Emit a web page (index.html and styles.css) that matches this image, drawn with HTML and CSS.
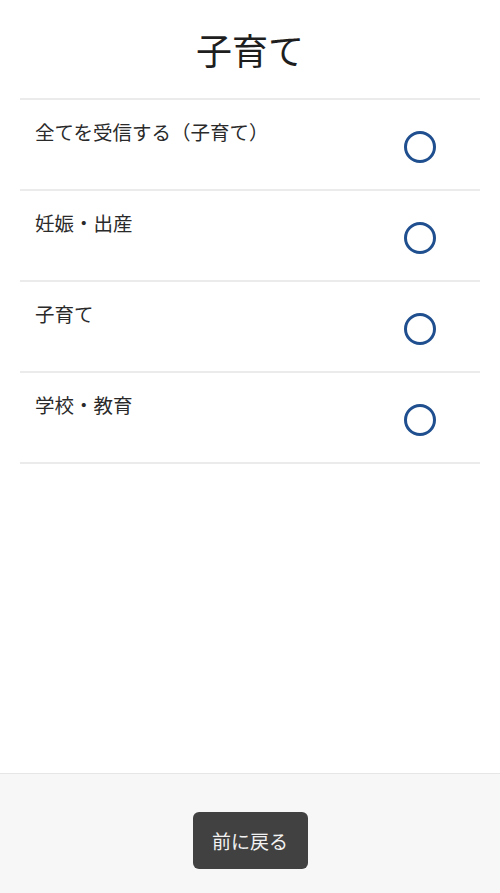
FILE: index.html
```html
<!DOCTYPE html>
<html lang="ja">
<head>
<meta charset="utf-8">
<title>子育て</title>
<link rel="stylesheet" href="styles.css">
</head>
<body>
<div class="page">
  <main class="main">
    <header class="header"><h1 class="title">子育て</h1></header>
    <ul class="list">
      <li class="row"><span class="label">全てを受信する（子育て）</span><span class="radio"></span></li>
      <li class="row"><span class="label">妊娠・出産</span><span class="radio"></span></li>
      <li class="row"><span class="label">子育て</span><span class="radio"></span></li>
      <li class="row"><span class="label">学校・教育</span><span class="radio"></span></li>
    </ul>
  </main>
  <footer class="footer">
    <button class="back" type="button">前に戻る</button>
  </footer>
</div>
</body>
</html>
```

FILE: styles.css
```css
html, body {
  margin: 0;
  padding: 0;
  background: #ffffff;
}
body {
  font-family: "Noto Sans CJK JP", "Noto Sans", sans-serif;
  color: #222222;
}
.page {
  display: flex;
  flex-direction: column;
  min-height: 100vh;
}
.main {
  flex: 1;
}
.header {
  height: 98px;
  display: flex;
  align-items: center;
  justify-content: center;
}
.title {
  margin: 0;
  font-size: 36px;
  font-weight: 400;
  line-height: 1;
  color: #1e1e1e;
}
.list {
  list-style: none;
  margin: 0 20px;
  padding: 0;
  border-top: 2px solid #ebebeb;
}
.row {
  display: flex;
  justify-content: space-between;
  align-items: flex-start;
  height: 91px;
  box-sizing: border-box;
  padding: 18px 44px 0 15px;
  border-bottom: 2px solid #ebebeb;
}
.label {
  font-size: 19.5px;
  line-height: 27px;
  color: #2a2a2a;
}
.radio {
  width: 32px;
  height: 32px;
  box-sizing: border-box;
  border: 3px solid #1f4f8e;
  border-radius: 50%;
  margin-top: 13px;
  flex: none;
}
.footer {
  height: 120px;
  box-sizing: border-box;
  background: #f7f7f7;
  border-top: 1px solid #e6e6e6;
  display: flex;
  justify-content: center;
  align-items: flex-start;
  padding-top: 38px;
}
.back {
  width: 115px;
  height: 57px;
  border: none;
  border-radius: 6px;
  background: #414141;
  color: #f2f2f2;
  font-family: "Noto Sans CJK JP", "Noto Sans", sans-serif;
  font-size: 19px;
  padding: 0;
  cursor: pointer;
}
```
